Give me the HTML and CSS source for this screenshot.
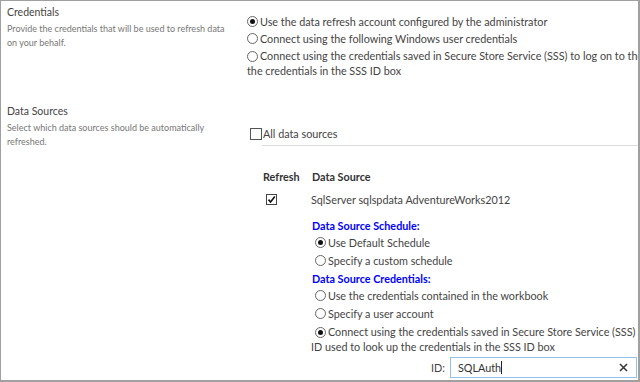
FILE: index.html
```html
<!DOCTYPE html>
<html lang="en">
<head>
  <meta charset="UTF-8" />
  <title>Data Refresh Settings</title>
  <link rel="stylesheet" href="styles.css">
</head>
<body>
  <div class="frame">

    <div class="section credentials">
      <div class="info">
        <div class="title">Credentials</div>
        <div class="desc">Provide the credentials that will be used to refresh data on your behalf.</div>
      </div>
      <div class="field">
        <div class="option"><span class="radio checked"></span>Use the data refresh account configured by the administrator</div>
        <div class="option"><span class="radio"></span>Connect using the following Windows user credentials</div>
        <div class="option long"><span class="radio"></span>Connect using the credentials saved in Secure Store Service (SSS) to log on to the data source. Enter the ID used to look up<br>the credentials in the SSS ID box</div>
      </div>
    </div>

    <div class="section sources">
      <div class="info">
        <div class="title">Data Sources</div>
        <div class="desc">Select which data sources should be automatically refreshed.</div>
      </div>
      <div class="field">
        <div class="option all"><span class="checkbox"></span>All data sources</div>
        <div class="source-list">
          <div class="source-table">
            <div class="head">Refresh</div>
            <div class="head">Data Source</div>

            <div class="cell"><span class="checkbox small checked">
              <svg width="9" height="9" viewBox="0 0 9 9"><path d="M1.5 4.6 L3.6 7 L7.8 1.6" fill="none" stroke="#111" stroke-width="1.6"/></svg>
            </span></div>
            <div class="cell">SqlServer sqlspdata AdventureWorks2012</div>

            <div class="cell"></div>
            <div class="details">
              <div class="group-title">Data Source Schedule:</div>
              <div class="option sub"><span class="radio checked"></span>Use Default Schedule</div>
              <div class="option sub"><span class="radio"></span>Specify a custom schedule</div>

              <div class="group-title">Data Source Credentials:</div>
              <div class="option sub"><span class="radio"></span>Use the credentials contained in the workbook</div>
              <div class="option sub"><span class="radio"></span>Specify a user account</div>
              <div class="option sub long"><span class="radio checked"></span>Connect using the credentials saved in Secure Store Service (SSS) to log on to the data source. Enter the<br>ID used to look up the credentials in the SSS ID box</div>

              <div class="id-row">
                <label for="sss-id">ID:</label>
                <div class="id-input">
                  <span class="value">SQLAuth</span><span class="caret"></span>
                  <svg class="clear" width="9" height="9" viewBox="0 0 9 9"><path d="M1 1 L8 8 M8 1 L1 8" stroke="#333" stroke-width="1.5"/></svg>
                </div>
              </div>
            </div>
          </div>
        </div>
      </div>
    </div>

  </div>
</body>
</html>
```

FILE: styles.css
```css
body {
  margin: 0;
  background: white;
  font-family: Lato, "Open Sans", sans-serif;
  color: #444;
}

.frame {
  width: 640px;
  height: 382px;
  box-sizing: border-box;
  border: 1px solid #a0a0a0;
  border-right-width: 2px;
  border-bottom-width: 2px;
  overflow: hidden;
  padding: 3px 0 0 6px;
}

.section {
  display: grid;
  grid-template-columns: 240px 1fr;
}

.sources {
  margin-top: 23px;
}

.title {
  font-size: 10.5px;
  line-height: 16px;
  color: #444;
}

.desc {
  font-size: 9px;
  line-height: 13.5px;
  color: #777;
  margin-top: 2px;
  width: 225px;
}

.field {
  font-size: 10.8px;
  line-height: 15px;
  white-space: nowrap;
}

.credentials .field {
  padding-top: 10px;
}

.option {
  display: flex;
  align-items: center;
  margin-bottom: 2px;
}

.option.long {
  display: block;
}

.option.long .radio {
  vertical-align: -2px;
}

.radio {
  display: inline-block;
  position: relative;
  width: 9px;
  height: 9px;
  border: 1px solid #666;
  border-radius: 50%;
  margin-right: 2px;
  flex: none;
}

.radio.checked::after {
  content: "";
  position: absolute;
  left: 2px;
  top: 2px;
  width: 5px;
  height: 5px;
  border-radius: 50%;
  background: #111;
}

.checkbox {
  display: inline-block;
  width: 10px;
  height: 10px;
  border: 1px solid #555;
  margin: 0 1px 0 3px;
  flex: none;
}

.all {
  margin-top: 23px;
}

.source-list {
  margin-left: 15px;
  border-top: 1px solid #dcdcdc;
  margin-top: 4px;
  padding-top: 23px;
}

.source-table {
  display: grid;
  grid-template-columns: 49px 1fr;
  align-items: center;
}

.head {
  font-weight: bold;
  color: #333;
  padding-left: 1px;
  line-height: 15px;
}

.cell {
  margin-top: 8px;
  line-height: 15px;
}

.checkbox.small {
  display: flex;
  align-items: center;
  justify-content: center;
  width: 9px;
  height: 9px;
  margin-left: 4px;
  border-color: #444;
}

.details {
  padding-top: 11px;
}

.group-title {
  color: #0000ff;
  font-weight: bold;
  margin: 2px 0 2px 1px;
  line-height: 15px;
}

.details .group-title:first-child {
  margin-top: 0;
}

.option.sub {
  margin: 0 0 3px 4px;
  height: 15px;
}

.option.sub.long {
  height: auto;
  margin-left: 0;
  text-indent: 4px;
}

.id-row {
  display: flex;
  align-items: center;
  margin-top: 2px;
  padding-left: 120px;
}

.id-row label {
  margin-right: 5px;
}

.id-input {
  display: flex;
  align-items: center;
  width: 170px;
  height: 19px;
  border: 1px solid #90c0ec;
  padding: 0 8px 0 7px;
}

.id-input .value {
  color: #333;
}

.caret {
  width: 1px;
  height: 13px;
  background: #222;
}

.clear {
  margin-left: auto;
}
```
